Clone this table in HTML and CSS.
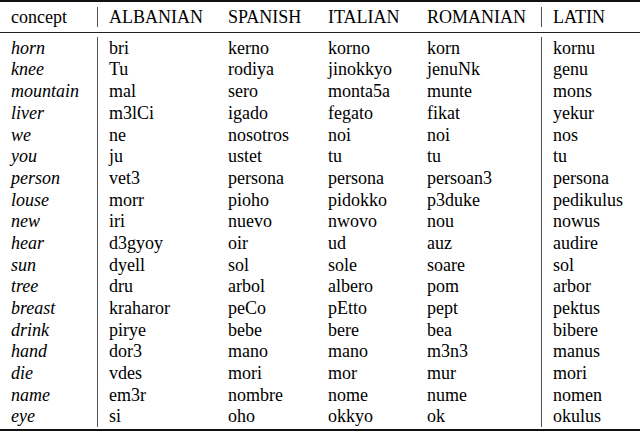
FILE: index.html
```html
<!DOCTYPE html>
<html>
<head>
<meta charset="utf-8">
<link rel="stylesheet" href="styles.css">
</head>
<body>
<div class="tbl">
  <div class="rule-heavy"></div>
  <div class="head">
    <div class="grid">
      <div class="c c1">concept</div>
      <div class="c c2">ALBANIAN</div>
      <div class="c c3">SPANISH</div>
      <div class="c c4">ITALIAN</div>
      <div class="c c5">ROMANIAN</div>
      <div class="c c6">LATIN</div>
    </div>
  </div>
  <div class="rule-mid"></div>
  <div class="body">
    <div class="grid rows">
      <div class="c c1 it">horn</div><div class="c c2">bri</div><div class="c c3">kerno</div><div class="c c4">korno</div><div class="c c5">korn</div><div class="c c6">kornu</div>
      <div class="c c1 it">knee</div><div class="c c2">Tu</div><div class="c c3">rodiya</div><div class="c c4">jinokkyo</div><div class="c c5">jenuNk</div><div class="c c6">genu</div>
      <div class="c c1 it">mountain</div><div class="c c2">mal</div><div class="c c3">sero</div><div class="c c4">monta5a</div><div class="c c5">munte</div><div class="c c6">mons</div>
      <div class="c c1 it">liver</div><div class="c c2">m3lCi</div><div class="c c3">igado</div><div class="c c4">fegato</div><div class="c c5">fikat</div><div class="c c6">yekur</div>
      <div class="c c1 it">we</div><div class="c c2">ne</div><div class="c c3">nosotros</div><div class="c c4">noi</div><div class="c c5">noi</div><div class="c c6">nos</div>
      <div class="c c1 it">you</div><div class="c c2">ju</div><div class="c c3">ustet</div><div class="c c4">tu</div><div class="c c5">tu</div><div class="c c6">tu</div>
      <div class="c c1 it">person</div><div class="c c2">vet3</div><div class="c c3">persona</div><div class="c c4">persona</div><div class="c c5">persoan3</div><div class="c c6">persona</div>
      <div class="c c1 it">louse</div><div class="c c2">morr</div><div class="c c3">pioho</div><div class="c c4">pidokko</div><div class="c c5">p3duke</div><div class="c c6">pedikulus</div>
      <div class="c c1 it">new</div><div class="c c2">iri</div><div class="c c3">nuevo</div><div class="c c4">nwovo</div><div class="c c5">nou</div><div class="c c6">nowus</div>
      <div class="c c1 it">hear</div><div class="c c2">d3gyoy</div><div class="c c3">oir</div><div class="c c4">ud</div><div class="c c5">auz</div><div class="c c6">audire</div>
      <div class="c c1 it">sun</div><div class="c c2">dyell</div><div class="c c3">sol</div><div class="c c4">sole</div><div class="c c5">soare</div><div class="c c6">sol</div>
      <div class="c c1 it">tree</div><div class="c c2">dru</div><div class="c c3">arbol</div><div class="c c4">albero</div><div class="c c5">pom</div><div class="c c6">arbor</div>
      <div class="c c1 it">breast</div><div class="c c2">kraharor</div><div class="c c3">peCo</div><div class="c c4">pEtto</div><div class="c c5">pept</div><div class="c c6">pektus</div>
      <div class="c c1 it">drink</div><div class="c c2">pirye</div><div class="c c3">bebe</div><div class="c c4">bere</div><div class="c c5">bea</div><div class="c c6">bibere</div>
      <div class="c c1 it">hand</div><div class="c c2">dor3</div><div class="c c3">mano</div><div class="c c4">mano</div><div class="c c5">m3n3</div><div class="c c6">manus</div>
      <div class="c c1 it">die</div><div class="c c2">vdes</div><div class="c c3">mori</div><div class="c c4">mor</div><div class="c c5">mur</div><div class="c c6">mori</div>
      <div class="c c1 it">name</div><div class="c c2">em3r</div><div class="c c3">nombre</div><div class="c c4">nome</div><div class="c c5">nume</div><div class="c c6">nomen</div>
      <div class="c c1 it">eye</div><div class="c c2">si</div><div class="c c3">oho</div><div class="c c4">okkyo</div><div class="c c5">ok</div><div class="c c6">okulus</div>
    </div>
  </div>
  <div class="rule-heavy bottom"></div>
</div>
</body>
</html>
```

FILE: styles.css
```css
html, body {
  margin: 0;
  padding: 0;
  background: #fff;
}

.tbl {
  width: 640px;
  font-family: "Liberation Serif", "Times New Roman", serif;
  font-size: 18px;
  color: #000;
}

.rule-heavy {
  height: 2px;
  background: #111;
}

.rule-heavy.bottom {
  margin-top: 2px;
}

.rule-mid {
  height: 1px;
  background: #222;
}

.head {
  padding: 5px 0 5px;
}

.head .c {
  line-height: 20px;
  height: 20px;
}

.body {
  padding: 4px 0 0;
}

.grid {
  display: grid;
  grid-template-columns: 97px 131px 100px 99px 114px 99px;
}

.rows .c {
  height: 21.7px;
  line-height: 20px;
  padding-top: 0.8px;
  padding-bottom: 0.9px;
  box-sizing: border-box;
}

.c {
  white-space: nowrap;
}

.c1 {
  padding-left: 11px;
}

.c2,
.c6 {
  border-left: 1px solid #555;
  padding-left: 11px;
}

.it {
  font-style: italic;
}
```
